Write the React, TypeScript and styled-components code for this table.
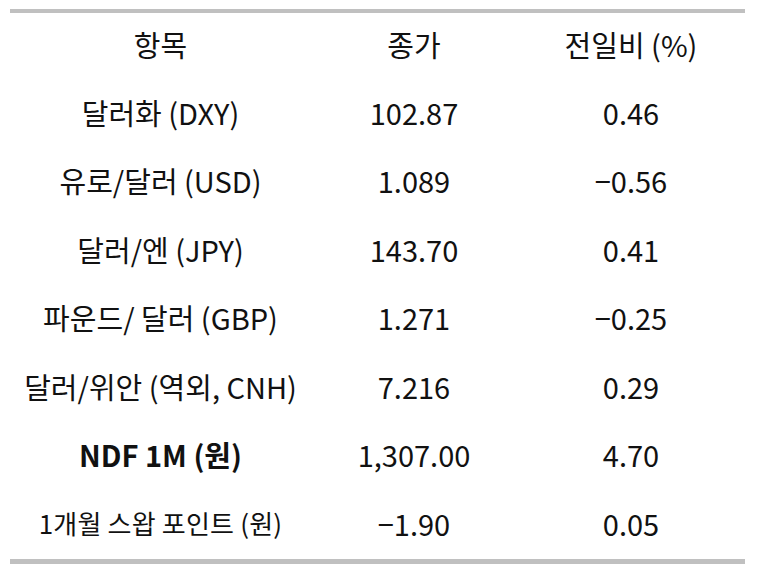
import React from 'react'
import styled, { createGlobalStyle } from 'styled-components'

const GlobalStyle = createGlobalStyle`
  html, body {
    margin: 0;
    padding: 0;
    background: #ffffff;
  }
  body {
    font-family: "Noto Sans CJK KR", "Noto Sans", sans-serif;
    color: #111111;
  }
`

interface RowData {
  name: string
  close: string
  change: string
  variant?: 'bold' | 'small'
}

const rows: RowData[] = [
  { name: '달러화 (DXY)', close: '102.87', change: '0.46' },
  { name: '유로/달러 (USD)', close: '1.089', change: '−0.56' },
  { name: '달러/엔 (JPY)', close: '143.70', change: '0.41' },
  { name: '파운드/ 달러 (GBP)', close: '1.271', change: '−0.25' },
  { name: '달러/위안 (역외, CNH)', close: '7.216', change: '0.29' },
  { name: 'NDF 1M (원)', close: '1,307.00', change: '4.70', variant: 'bold' },
  { name: '1개월 스왑 포인트 (원)', close: '−1.90', change: '0.05', variant: 'small' },
]

export default function App() {
  return (
    <>
      <GlobalStyle />
      <Page>
        <Table>
          <colgroup>
            <col style={{ width: 301 }} />
            <col style={{ width: 206 }} />
            <col style={{ width: 228 }} />
          </colgroup>
          <thead>
            <HeadRow>
              <HeadCell>항목</HeadCell>
              <HeadCell>종가</HeadCell>
              <HeadCell>전일비 (%)</HeadCell>
            </HeadRow>
          </thead>
          <tbody>
            {rows.map((row) => (
              <BodyRow key={row.name}>
                <NameCell $variant={row.variant}>{row.name}</NameCell>
                <Cell>{row.close}</Cell>
                <Cell>{row.change}</Cell>
              </BodyRow>
            ))}
          </tbody>
        </Table>
      </Page>
    </>
  )
}

const Page = styled.div`
  width: 757px;
  height: 566px;
  padding: 9px 0 0 10px;
  box-sizing: border-box;
`

const Table = styled.table`
  width: 735px;
  border-collapse: separate;
  border-spacing: 0;
  table-layout: fixed;
  border-top: 4px solid #c0c0c0;
  border-bottom: 5px solid #c0c0c0;
`

const HeadRow = styled.tr`
  height: 66px;
`

const BodyRow = styled.tr`
  height: 69px;

  &:nth-child(even) {
    height: 68px;
  }
`

const Cell = styled.td`
  padding: 0 0 3px;
  text-align: center;
  vertical-align: middle;
  font-size: 29px;
  line-height: 1;
  letter-spacing: 0;
  color: #111111;
`

const HeadCell = styled(Cell).attrs({ as: 'th' })`
  font-weight: 400;
  padding: 0 0 4px;
`

const NameCell = styled(Cell)<{ $variant?: 'bold' | 'small' }>`
  font-weight: ${({ $variant }) => ($variant === 'bold' ? 700 : 400)};
  font-size: ${({ $variant }) => ($variant === 'small' ? '26px' : '29px')};
  letter-spacing: ${({ $variant }) => ($variant === 'small' ? '0.2px' : '0')};
`
